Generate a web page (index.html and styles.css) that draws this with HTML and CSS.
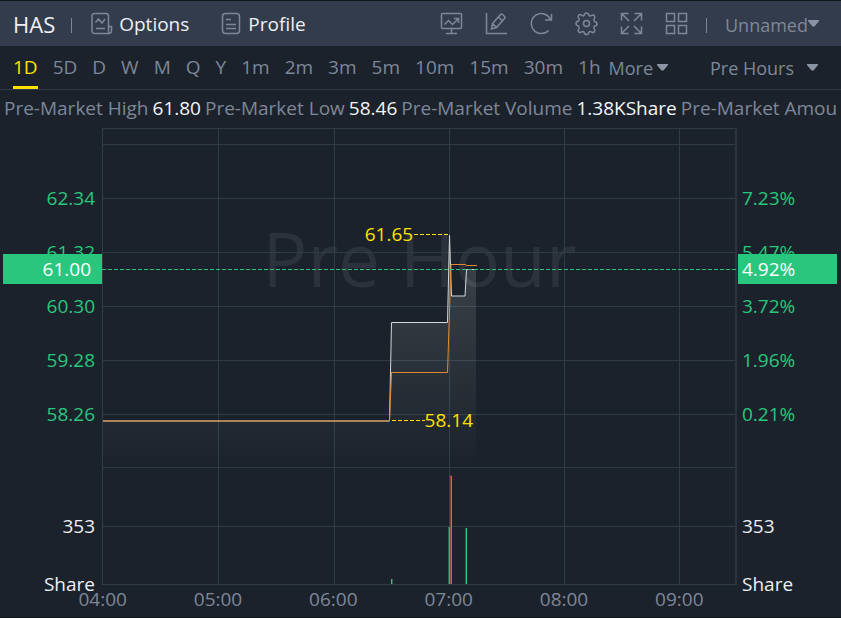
FILE: index.html
```html
<!DOCTYPE html>
<html lang="en">
<head>
<meta charset="utf-8">
<meta name="viewport" content="width=device-width, initial-scale=1">
<title>HAS</title>
<link rel="stylesheet" href="styles.css">
</head>
<body>
<header class="topbar">
  <h1 class="symbol">HAS</h1>
  <span class="divider"></span>
  <button class="link options" type="button">
    <svg class="icon" width="24" height="24" viewBox="0 0 24 24"><path d="M18.500 14.500V4a2.500 2.500 0 0 0-2.500-2.500H4.500A2.500 2.500 0 0 0 2 4v15a2.500 2.500 0 0 0 2.500 2.500H19a2.500 2.500 0 0 0 2.500-2.500v-4.500h-3V19q0 1.500 1 2.500M5.500 10.500l3-3.500 3.500 4 3-4M6 16.500h9"/></svg>
    Options
  </button>
  <button class="link" type="button">
    <svg class="icon" width="20" height="24" viewBox="0 0 20 24"><rect x="1.500" y="1.500" width="17" height="20" rx="3"/><path d="M5 7.500h5M5 12.500h10M5 16.500h10"/></svg>
    Profile
  </button>
  <div class="tools">
    <button type="button" aria-label="Monitor"><svg class="icon" width="24" height="24" viewBox="0 0 24 24"><rect x="1.500" y="1.500" width="20" height="15" rx="1"/><path d="M11.500 17v4.500M6 21.500h11M4.500 12.500l4-4 4 4 6-6M14 6.500h4.500V11"/></svg></button>
    <button type="button" aria-label="Draw"><svg class="icon" width="24" height="24" viewBox="0 0 24 24"><path d="M1.500 1v20.500H22M6.500 17l1-5.500 8-9q1-1 2 0l2 2q1 1 0 2l-8 9zM7.500 11.500l4 4M13.500 5l4 4"/></svg></button>
    <button type="button" aria-label="Refresh"><svg class="icon" width="24" height="24" viewBox="0 0 24 24"><path d="M18.500 18.500A10 10 0 1 1 20.500 7.500M21.500 2v6H15"/></svg></button>
    <button type="button" aria-label="Settings"><svg class="icon" width="24" height="24" viewBox="0 0 24 24"><path d="M9 3.500Q9.500 1 11.500 1T14 3.500q1 1 2.500 0 2-1 3 .5t-.5 3q-.5 1.500.5 2.500 2.500.500 2.500 2.500T19.500 14q-1 1-.5 2.500 1.500 1.500.5 3t-3 .5q-1.500-1-2.500 0-.5 2.500-2.500 2.500T9 20q-1-1-2.500 0-2 1-3-.5t.5-3Q4.500 15 3.500 14 1 13.500 1 11.500T3.500 9Q4.500 8 4 6.500 2.500 5 3.500 3.500t3-.5Q8 4.500 9 3.500z"/><circle cx="11.500" cy="11.500" r="3"/></svg></button>
    <button type="button" aria-label="Full screen"><svg class="icon" width="24" height="24" viewBox="0 0 24 24"><path d="M1.500 8.500v-7h7M1.500 1.500L9 9M14.500 1.500h7v7M21.500 1.500L14 9M1.500 14.500v7h7M1.500 21.500L9 14M14.500 21.500h7v-7M21.500 21.500L14 14"/></svg></button>
    <button type="button" aria-label="Layout"><svg class="icon" width="24" height="24" viewBox="0 0 24 24"><path d="M1.500 1.500h8v8h-8zM13.500 1.500h8v8h-8zM1.500 13.500h8v8h-8zM13.500 13.500h8v8h-8z"/></svg></button>
  </div>
  <span class="divider"></span>
  <div class="picker unnamed">
    <select aria-label="Layout name"><option>Unnamed</option></select>
    <svg class="caret" width="11" height="7" viewBox="0 0 11 7"><path d="M0 0h11v1L6.500 6.500h-2L0 1z"/></svg>
  </div>
</header>

<nav class="periods">
  <button class="active" type="button">1D</button>
  <button type="button">5D</button>
  <button type="button">D</button>
  <button type="button">W</button>
  <button type="button">M</button>
  <button type="button">Q</button>
  <button type="button">Y</button>
  <button type="button">1m</button>
  <button type="button">2m</button>
  <button type="button">3m</button>
  <button type="button">5m</button>
  <button type="button">10m</button>
  <button type="button">15m</button>
  <button type="button">30m</button>
  <button type="button">1h</button>
  <div class="picker more">
    <select aria-label="More periods"><option>More</option></select>
    <svg class="caret" width="11" height="7" viewBox="0 0 11 7"><path d="M0 0h11v1L6.500 6.500h-2L0 1z"/></svg>
  </div>
  <div class="picker hours">
    <select aria-label="Trading hours"><option>Pre Hours</option></select>
    <svg class="caret" width="11" height="7" viewBox="0 0 11 7"><path d="M0 0h11v1L6.500 6.500h-2L0 1z"/></svg>
  </div>
</nav>

<div class="stats">
  <span>Pre-Market High</span><b>61.80</b>
  <span>Pre-Market Low</span><b>58.46</b>
  <span>Pre-Market Volume</span><b>1.38KShare</b>
  <span>Pre-Market Amount</span>
</div>

<main class="chart">
  <div class="axis prices">
    <span>62.34</span><span>61.32</span><span>60.30</span><span>59.28</span><span>58.26</span>
    <span class="volume">353</span><span class="volume">Share</span>
    <strong class="tag">61.00</strong>
  </div>
  <div class="plot">
    <div class="watermark">Pre Hour</div>
    <svg class="lines" viewBox="0 0 635 456" preserveAspectRatio="none">
      <defs>
        <linearGradient id="shade" gradientUnits="userSpaceOnUse" x1="0" y1="107" x2="0" y2="339">
          <stop offset="0" stop-color="#fff" stop-opacity=".16"/>
          <stop offset="1" stop-color="#fff" stop-opacity="0"/>
        </linearGradient>
      </defs>
      <path class="grid" d="M0 .5H635M0 16.500H633M0 70.500H633M0 124.500H633M0 178.500H633M0 232.500H633M0 286.500H633M0 339.500H633M0 398.500H633M0 456.500H635M.5 0V456M116.500 0V456M232.500 0V456M347.500 0V456M462.500 0V456M577.500 0V456"/>
      <path class="edge" d="M634 0V456"/>
      <path fill="url(#shade)" d="M1 293H287L290 194.500H345.500L347 107L349.500 168H363L364.500 141H374V339H1z"/>
      <path class="price" d="M1 293H287.500L289.500 194.500H345.500L347.500 107L349.500 168H363L364.500 141.500H374"/>
      <path class="average" d="M1 293H287.500L289.500 244.500H345.500L349 136.500H363L365 137.500H375"/>
      <path class="current" d="M0 141.500H635"/>
      <path class="hint" d="M312 106.500H347M290 292.500H323"/>
      <path class="up-soft" d="M346 399h1v57h-1zM290 451h1v5h-1zM363 400h1v56h-1z"/>
      <path class="up" d="M347 399h1v57h-1zM289 451h1v5h-1zM364 400h1v56h-1z"/>
      <path class="down-soft" d="M348 347h1v109h-1z"/>
      <path class="down" d="M349 348h1v108h-1z"/>
    </svg>
    <span class="mark high">61.65</span>
    <span class="mark low">58.14</span>
  </div>
  <div class="axis changes">
    <span>7.23%</span><span>5.47%</span><span>3.72%</span><span>1.96%</span><span>0.21%</span>
    <span class="volume">353</span><span class="volume">Share</span>
    <strong class="tag">4.92%</strong>
  </div>
  <div class="times">
    <span>04:00</span><span>05:00</span><span>06:00</span><span>07:00</span><span>08:00</span><span>09:00</span>
  </div>
</main>
</body>
</html>
```
FILE: styles.css
```css
* { box-sizing: border-box; }

body {
  display: flex;
  flex-direction: column;
  min-height: 100vh;
  margin: 0;
  overflow-x: hidden;
  border-top: 1px solid #11161d;
  border-bottom: 1px solid #11161d;
  background: #1b222b;
  color: #7e8798;
  font: 19px/24px "Open Sans", "Noto Sans", sans-serif;
}

button, select {
  margin: 0;
  padding: 0;
  border: 0;
  background: none;
  color: inherit;
  font: inherit;
  white-space: nowrap;
}

select { appearance: none; font-size: 18px; line-height: 28px; }

.topbar {
  display: flex;
  align-items: center;
  height: 45px;
  padding: 0 22px 0 13px;
  background: #323c4c;
}

.symbol {
  margin: 0 16px 0 0;
  color: #eef0f3;
  font-size: 22px;
  font-weight: 400;
}

.divider {
  width: 1px;
  height: 15px;
  margin-top: 4px;
  background: #7e8798;
}

.link {
  display: flex;
  align-items: center;
  gap: 7px;
  color: #eef0f3;
}

.options { gap: 5px; margin: 0 32px 0 18px; }

.icon {
  display: block;
  flex: none;
  fill: none;
  stroke: #7e8798;
  stroke-width: 1.5;
}

.tools {
  display: flex;
  gap: 21px;
  margin: 0 17px 0 auto;
}

.picker { display: flex; align-items: center; }
.caret { flex: none; fill: #8b94a5; }
.unnamed { margin-left: 18px; }
.unnamed select { margin-top: 2px; }

.periods {
  display: flex;
  gap: 15px;
  height: 44px;
  padding: 0 23px 0 13px;
  border-bottom: 1px solid #303a48;
}

.periods button { padding-top: 1px; border-bottom: 3px solid transparent; }
.periods .active { border-color: #ffe100; color: #ffe100; }
.more { gap: 3px; margin-left: -7px; }
.hours { gap: 12px; margin-left: auto; }

.stats {
  display: flex;
  gap: 4px;
  height: 38px;
  margin: 0 3px 0 4px;
  overflow: hidden;
  line-height: 36px;
  white-space: nowrap;
}

.stats b { color: #f4f5f7; font-weight: 400; }

.chart {
  display: grid;
  flex: 1;
  grid-template: minmax(300px, 1fr) 33px / 102px 1fr 104px;
}

.axis {
  position: relative;
  display: grid;
  grid-row: 1 / 3;
  grid-template-rows: 43fr repeat(5, 54fr) 56fr 58fr 58fr 4fr;
  align-items: center;
  color: #29c77d;
}

.axis::before { content: ""; grid-row: 1; }
.axis .volume { grid-row: 8; color: #eef0f3; }
.axis .volume + .volume { grid-row: 9; }
.prices { grid-column: 1; padding-right: 7px; text-align: right; }
.changes { grid-column: 3; padding-left: 5px; }

.tag {
  position: absolute;
  top: calc(29% - 16px);
  right: 0;
  left: 3px;
  padding-right: 11px;
  background: #29c77d;
  color: #fff;
  font-weight: 400;
  line-height: 30px;
}

.changes .tag { right: 4px; left: 1px; padding: 0 0 0 4px; }

.plot { position: relative; grid-column: 2; min-width: 0; }

.watermark {
  position: absolute;
  top: 20%;
  right: 0;
  left: 0;
  color: #2b323b;
  font-size: 75px;
  font-weight: 500;
  line-height: 78px;
  text-align: center;
}

.lines {
  position: absolute;
  width: 100%;
  height: 100%;
  overflow: visible;
}

.grid, .edge, .price, .average, .current, .hint { fill: none; stroke-width: 1; }
.grid { stroke: #2f3b49; }
.edge { stroke: #2a3440; stroke-width: 2; }
.price { stroke: #d4d7dc; }
.average { stroke: #e08a30; }
.current { stroke: #29c77d; stroke-dasharray: 4 2; }
.hint { stroke: #ffe100; stroke-dasharray: 4 2; }
.up { fill: #29c77d; }
.up-soft { fill: #226748; }
.down { fill: #e85b52; }
.down-soft { fill: #85413f; }

.mark { position: absolute; color: #ffe100; line-height: 24px; }
.high { top: 20.6%; right: 51%; }
.low { top: 61.4%; left: 50.8%; }

.times {
  display: grid;
  grid-column: 1 / 4;
  grid-row: 2;
  grid-template-columns: repeat(6, 1fr);
  margin: 0 104px 0 45px;
  line-height: 30px;
  text-align: center;
}
```
